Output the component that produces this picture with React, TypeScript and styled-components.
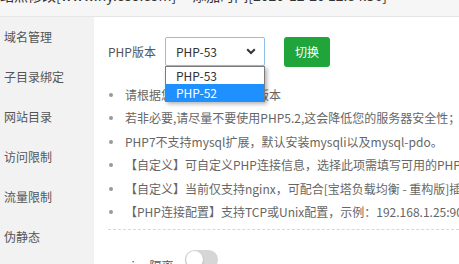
import React from "react";
import styled, { createGlobalStyle } from "styled-components";

const Global = createGlobalStyle`
  html, body { margin: 0; padding: 0; background: #fff; }
  body { font-family: "Noto Sans CJK SC", "Noto Sans", sans-serif; }
`;

const Page = styled.div`
  width: 459px;
  height: 264px;
  overflow: hidden;
  display: flex;
  flex-direction: column;
`;

const Header = styled.div`
  height: 16px;
  flex: none;
  overflow: hidden;
  background: #f6f6f6;
  border-bottom: 1px solid #e6e6e6;
`;

const HeaderText = styled.div`
  margin-top: -15px;
  font-size: 14px;
  line-height: 20px;
  color: #333;
  white-space: nowrap;
`;

const Body = styled.div`
  flex: 1;
  display: flex;
  min-height: 0;
`;

const Sidebar = styled.div`
  width: 94px;
  flex: none;
  background: #f2f2f2;
  display: flex;
  flex-direction: column;
`;

const NavItem = styled.div`
  height: 40px;
  line-height: 40px;
  padding-left: 4px;
  font-size: 12px;
  color: #555;
  white-space: nowrap;
`;

const Content = styled.div`
  flex: 1;
  min-width: 0;
  padding: 20px 0 0 14px;
  overflow: hidden;
`;

const Row = styled.div`
  display: flex;
  align-items: center;
  height: 29px;
`;

const Label = styled.span`
  font-size: 12px;
  color: #555;
  width: 57px;
  flex: none;
`;

const SelectWrap = styled.div`
  position: relative;
  width: 100px;
  height: 29px;
  flex: none;
`;

const SelectBox = styled.div`
  box-sizing: border-box;
  width: 100%;
  height: 100%;
  border: 1px solid #8cc0ea;
  border-radius: 2px;
  display: flex;
  align-items: center;
  justify-content: space-between;
  padding: 0 8px 0 10px;
  font-size: 12px;
  color: #333;
  background: #fff;
`;

const Dropdown = styled.div`
  position: absolute;
  left: 0;
  top: 29px;
  width: 100px;
  box-sizing: border-box;
  border: 1px solid #7b7b7b;
  background: #fff;
  box-shadow: 2px 2px 4px rgba(0, 0, 0, 0.3);
  z-index: 5;
`;

const Option = styled.div<{ $active?: boolean }>`
  height: 17px;
  line-height: 17px;
  padding-left: 10px;
  font-size: 12px;
  color: ${(p) => (p.$active ? "#fff" : "#333")};
  background: ${(p) => (p.$active ? "#1e90ff" : "#fff")};
`;

const Button = styled.button`
  margin-left: 19px;
  width: 46px;
  height: 30px;
  border: none;
  border-radius: 3px;
  background: #20a53a;
  color: #fff;
  font-family: inherit;
  font-size: 12px;
  padding: 0;
`;

const Tips = styled.ul`
  list-style: none;
  margin: 17px 0 0;
  padding: 0;
`;

const Tip = styled.li`
  position: relative;
  padding-left: 17px;
  font-size: 12px;
  line-height: 23.4px;
  color: #666;
  white-space: nowrap;
  &::before {
    content: "";
    position: absolute;
    left: 1px;
    top: 10px;
    width: 4px;
    height: 4px;
    border-radius: 50%;
    background: #999;
  }
`;

const Divider = styled.div`
  margin-top: 6px;
  border-top: 1px dashed #d8d8d8;
`;

const SessionRow = styled.div`
  display: flex;
  align-items: center;
  margin-top: 15px;
`;

const SessionLabel = styled.span`
  font-size: 12px;
  color: #555;
  width: 77px;
  flex: none;
  padding-top: 12px;
`;

const Toggle = styled.div`
  width: 33px;
  height: 19px;
  border-radius: 10px;
  background: #d6d6d6;
  position: relative;
  flex: none;
  &::after {
    content: "";
    position: absolute;
    left: 1px;
    top: 1px;
    width: 17px;
    height: 17px;
    border-radius: 50%;
    background: #fff;
    box-shadow: 0 1px 2px rgba(0, 0, 0, 0.25);
  }
`;

const Chevron = () => (
  <svg width="10" height="7" viewBox="0 0 10 7">
    <path d="M1.2 1.2 L5 5 L8.8 1.2" fill="none" stroke="#333" strokeWidth="2" />
  </svg>
);

const navs = ["域名管理", "子目录绑定", "网站目录", "访问限制", "流量限制", "伪静态"];

const tips = [
  "请根据您的程序需求选择版本",
  "若非必要,请尽量不要使用PHP5.2,这会降低您的服务器安全性；PHP7及以上",
  "PHP7不支持mysql扩展，默认安装mysqli以及mysql-pdo。",
  "【自定义】可自定义PHP连接信息，选择此项需填写可用的PHP-FPM",
  "【自定义】当前仅支持nginx，可配合[宝塔负载均衡 - 重构版]插件",
  "【PHP连接配置】支持TCP或Unix配置，示例：192.168.1.25:9001",
];

export default function App() {
  return (
    <Page>
      <Global />
      <Header>
        <HeaderText>站点修改[www.hy.ceo.com]  --  添加时间[2020-12-20 12:34:56]</HeaderText>
      </Header>
      <Body>
        <Sidebar>
          {navs.map((n) => (
            <NavItem key={n}>{n}</NavItem>
          ))}
        </Sidebar>
        <Content>
          <Row>
            <Label>PHP版本</Label>
            <SelectWrap>
              <SelectBox>
                <span>PHP-53</span>
                <Chevron />
              </SelectBox>
              <Dropdown>
                <Option>PHP-53</Option>
                <Option $active>PHP-52</Option>
              </Dropdown>
            </SelectWrap>
            <Button>切换</Button>
          </Row>
          <Tips>
            {tips.map((t) => (
              <Tip key={t}>{t}</Tip>
            ))}
          </Tips>
          <Divider />
          <SessionRow>
            <SessionLabel>session隔离</SessionLabel>
            <Toggle />
          </SessionRow>
        </Content>
      </Body>
    </Page>
  );
}
